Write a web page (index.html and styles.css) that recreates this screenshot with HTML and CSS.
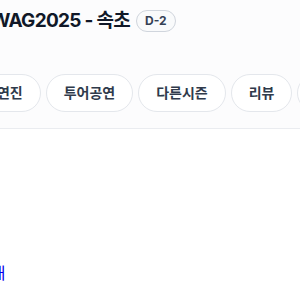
FILE: index.html
```html
<!DOCTYPE html>
<html lang="ko">
<head>
    <meta charset="UTF-8">
    <meta name="viewport" content="width=device-width, initial-scale=1.0">
    <title>SWAG2025 - 속초</title>
    <link rel="stylesheet" href="styles.css">
</head>
<body>
    <header class="show-header">
        <div class="title-row">
            <h1 class="show-title">SWAG2025 - 속초</h1>
            <span class="dday">D-2</span>
        </div>
        <nav class="tabs">
            <a class="tab" href="#cast">출연진</a>
            <a class="tab" href="#tour">투어공연</a>
            <a class="tab" href="#seasons">다른시즌</a>
            <a class="tab" href="#review">리뷰</a>
            <a class="tab" href="#info">정보</a>
        </nav>
    </header>

    <main class="content">
        <a class="more-link" href="#guide">공연 안내</a>
    </main>
</body>
</html>
```
FILE: styles.css
```css
/* page */
body {
    margin: 0;
    width: 300px;
    height: 300px;
    overflow: hidden;
    background-color: #fff;
    font-family: Inter, "Noto Sans CJK KR", sans-serif;
    color: #101828;
}

.show-header {
    background-color: #fcfcfd;
    border-bottom: 1px solid #eaecf0;
    padding: 9px 0 16px;
    white-space: nowrap;
}

.title-row {
    display: flex;
    align-items: center;
    gap: 6px;
    margin-left: -21px;
}

.show-title {
    margin: 0;
    font-size: 19px;
    font-weight: 700;
    letter-spacing: -0.7px;
    line-height: 24px;
}

.dday {
    padding: 2px 8px;
    border: 1px solid #d0d5dd;
    border-radius: 999px;
    background-color: #f9fafb;
    color: #344054;
    font-size: 12px;
    font-weight: 700;
    line-height: 16px;
}

.tabs {
    display: flex;
    gap: 5px;
    margin-top: 41px;
    margin-left: -34px;
}

.tab {
    flex: none;
    padding: 0 17px;
    height: 36px;
    line-height: 36px;
    border: 1px solid #e4e7ec;
    border-radius: 999px;
    background-color: #fff;
    color: #2f3a4b;
    font-size: 14px;
    font-weight: 600;
    text-decoration: none;
}

.content {
    padding-top: 131px;
    margin-left: -58px;
    white-space: nowrap;
}

.more-link {
    color: #0000ee;
    font-size: 16px;
    text-decoration: none;
}
```
